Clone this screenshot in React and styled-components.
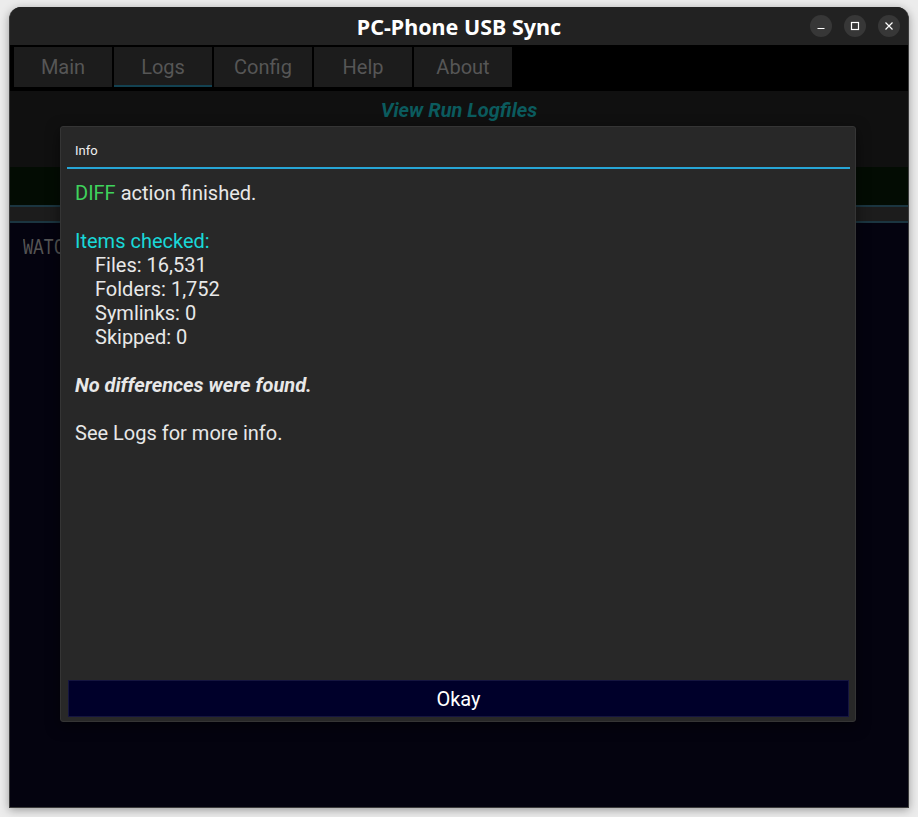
import React from "react";
import styled, { createGlobalStyle } from "styled-components";

const GlobalStyle = createGlobalStyle`
  html, body {
    margin: 0;
    padding: 0;
    background: #ececec;
  }
  body {
    font-family: Roboto, "Noto Sans", sans-serif;
  }
`;

const tabs = ["Main", "Logs", "Config", "Help", "About"];

const summary = [
  "Files: 16,531",
  "Folders: 1,752",
  "Symlinks: 0",
  "Skipped: 0",
];

export default function App() {
  return (
    <>
      <GlobalStyle />
      <Page>
        <Window>
          <TitleBar>
            <Title>PC-Phone USB Sync</Title>
            <Controls>
              <CtrlButton>
                <svg width="10" height="10" viewBox="0 0 10 10">
                  <path d="M1.5 7.5h7" stroke="#fff" strokeWidth="1.2" />
                </svg>
              </CtrlButton>
              <CtrlButton>
                <svg width="10" height="10" viewBox="0 0 10 10">
                  <rect x="1.5" y="1.5" width="7" height="7" fill="none" stroke="#fff" strokeWidth="1.2" />
                </svg>
              </CtrlButton>
              <CtrlButton>
                <svg width="10" height="10" viewBox="0 0 10 10">
                  <path d="M1.5 1.5l7 7M8.5 1.5l-7 7" stroke="#fff" strokeWidth="1.2" />
                </svg>
              </CtrlButton>
            </Controls>
          </TitleBar>

          <Content>
            <TabBar>
              {tabs.map((t) => (
                <Tab key={t} $active={t === "Logs"}>
                  {t}
                </Tab>
              ))}
            </TabBar>

            <Heading>
              <h2>View Run Logfiles</h2>
            </Heading>
            <StatusStrip />
            <Divider />
            <LogArea>
              <LogText>WATCH</LogText>
            </LogArea>

            <Modal>
              <ModalHeader>Info</ModalHeader>
              <ModalBody>
                <Line>
                  <Green>DIFF</Green> action finished.
                </Line>
                <Blank />
                <Line>
                  <Cyan>Items checked:</Cyan>
                </Line>
                {summary.map((s) => (
                  <Line key={s} $indent>
                    {s}
                  </Line>
                ))}
                <Blank />
                <Line>
                  <strong>
                    <em>No differences were found.</em>
                  </strong>
                </Line>
                <Blank />
                <Line>See Logs for more info.</Line>
              </ModalBody>
              <OkayButton>Okay</OkayButton>
            </Modal>
          </Content>
        </Window>
      </Page>
    </>
  );
}

const Page = styled.div`
  width: 918px;
  height: 817px;
  padding: 7px 9px 0 9px;
  box-sizing: border-box;
  overflow: hidden;
`;

const Window = styled.div`
  width: 900px;
  height: 801px;
  box-sizing: border-box;
  border: 1px solid #3c3c3c;
  border-top: none;
  border-radius: 12px 12px 0 0;
  background: #222222;
  box-shadow: 0 2px 10px rgba(0, 0, 0, 0.35);
  display: flex;
  flex-direction: column;
  overflow: hidden;
`;

const TitleBar = styled.div`
  height: 38px;
  flex: none;
  display: flex;
  align-items: center;
  justify-content: center;
  position: relative;
  background: #222222;
`;

const Title = styled.div`
  font-family: "Noto Sans", sans-serif;
  font-weight: 700;
  font-size: 21.5px;
  color: #ffffff;
`;

const Controls = styled.div`
  position: absolute;
  right: 8px;
  top: 8px;
  display: flex;
  gap: 12px;
`;

const CtrlButton = styled.div`
  width: 22px;
  height: 22px;
  border-radius: 50%;
  background: #373737;
  display: flex;
  align-items: center;
  justify-content: center;
`;

const Content = styled.div`
  flex: 1;
  display: flex;
  flex-direction: column;
  position: relative;
  background: #000000;
`;

const TabBar = styled.div`
  height: 46px;
  flex: none;
  box-sizing: border-box;
  padding: 2px 4px 0 4px;
  display: flex;
  gap: 2px;
  background: #000000;
`;

const Tab = styled.div`
  width: 98px;
  height: 40px;
  box-sizing: border-box;
  background: #1c1c1c;
  color: #565656;
  font-size: 20px;
  display: flex;
  align-items: center;
  justify-content: center;
  border-bottom: 2px solid ${(p) => (p.$active ? "#134252" : "#1c1c1c")};
  padding-top: 1px;
`;

const Heading = styled.div`
  height: 76px;
  flex: none;
  background: #101010;
  display: flex;
  justify-content: center;

  h2 {
    margin: 7px 0 0 0;
    font-size: 20px;
    font-weight: 700;
    font-style: italic;
    color: #0b5b5e;
  }
`;

const StatusStrip = styled.div`
  height: 38px;
  flex: none;
  background: #030c03;
`;

const Divider = styled.div`
  height: 18px;
  flex: none;
  box-sizing: border-box;
  background: #1c1c1c;
  border-top: 2px solid #1b3540;
  border-bottom: 2px solid #1b3540;
`;

const LogArea = styled.div`
  flex: 1;
  background: #04030f;
  padding: 13px 13px;
`;

const LogText = styled.span`
  display: inline-block;
  color: #555555;
  font-family: "Liberation Mono", monospace;
  font-size: 22px;
  transform: scaleX(0.78);
  transform-origin: left center;
`;

const Modal = styled.div`
  position: absolute;
  left: 50px;
  top: 81px;
  width: 796px;
  height: 596px;
  box-sizing: border-box;
  background: #282828;
  border: 1px solid #353535;
  border-radius: 3px;
  box-shadow: 0 4px 14px rgba(0, 0, 0, 0.5);
  padding: 0 5px 4px 6px;
  display: flex;
  flex-direction: column;
`;

const ModalHeader = styled.div`
  height: 42px;
  flex: none;
  box-sizing: border-box;
  border-bottom: 2px solid #27a6d6;
  color: #f0f0f0;
  font-size: 13px;
  display: flex;
  align-items: center;
  padding: 6px 0 0 8px;
`;

const ModalBody = styled.div`
  flex: 1;
  padding: 12px 8px 0 8px;
  color: #e8e8e8;
  font-size: 20px;
  line-height: 24px;
`;

const Line = styled.div`
  padding-left: ${(p) => (p.$indent ? "20px" : "0")};
  white-space: pre;
`;

const Blank = styled.div`
  height: 24px;
`;

const Green = styled.span`
  color: #3fd35c;
`;

const Cyan = styled.span`
  color: #19d8d8;
`;

const OkayButton = styled.div`
  height: 37px;
  flex: none;
  box-sizing: border-box;
  margin: 0 1px;
  background: #00002a;
  border: 1px solid #151540;
  color: #ffffff;
  font-size: 20px;
  display: flex;
  align-items: center;
  justify-content: center;
`;
